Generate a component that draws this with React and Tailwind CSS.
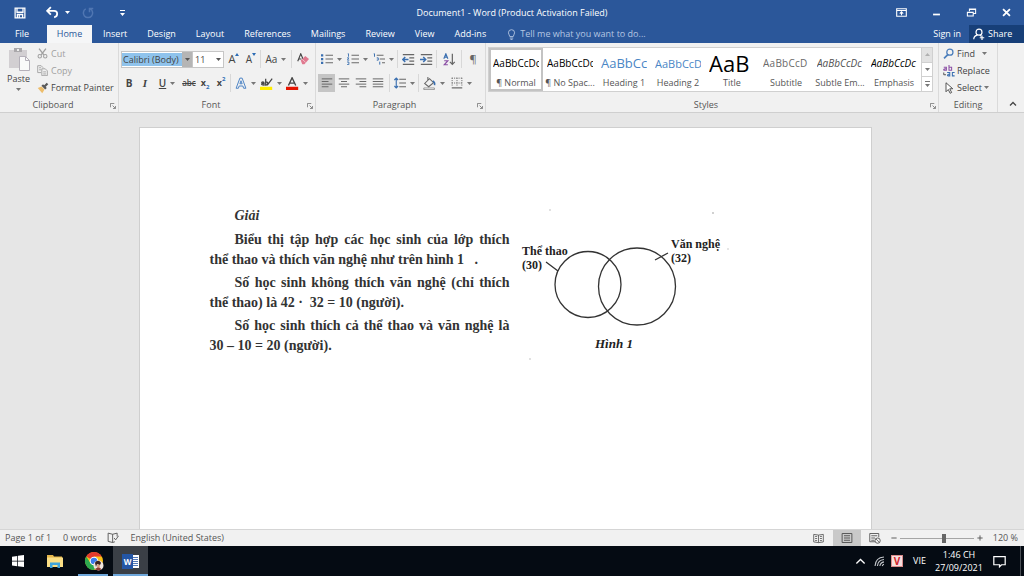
import React, { useState } from 'react';
import clsx from 'clsx';

const TABS = ['Insert', 'Design', 'Layout', 'References', 'Mailings', 'Review', 'View', 'Add-ins'];

const STYLES = [
  { name: '¶ Normal', sample: 'AaBbCcDc', className: 'text-[10px] text-black', active: true },
  { name: '¶ No Spac...', sample: 'AaBbCcDc', className: 'text-[10px] text-black' },
  { name: 'Heading 1', sample: 'AaBbCc', className: 'text-[13px] text-[#4a86c5]' },
  { name: 'Heading 2', sample: 'AaBbCcD', className: 'text-[11px] text-[#4a86c5]' },
  { name: 'Title', sample: 'AaB', className: 'text-[22px] text-black' },
  { name: 'Subtitle', sample: 'AaBbCcD', className: 'text-[10px] tracking-wide text-[#6a6a6a]' },
  { name: 'Subtle Em...', sample: 'AaBbCcDc', className: 'text-[10px] italic text-[#505050]' },
  { name: 'Emphasis', sample: 'AaBbCcDc', className: 'text-[10px] italic text-black' },
];

function Icon({ className = 'size-4', children }) {
  return (
    <svg viewBox="0 0 16 16" fill="none" stroke="currentColor" className={clsx('shrink-0', className)} aria-hidden="true">
      {children}
    </svg>
  );
}

function Caret({ className }) {
  return (
    <svg viewBox="0 0 5 3" className={clsx('w-[5px] h-[3px] shrink-0', className)} aria-hidden="true">
      <path d="M0 0h5L2.5 3z" fill="currentColor" />
    </svg>
  );
}

function Tool({ label, caret, active, className = 'w-4', children }) {
  return (
    <button
      aria-label={label}
      className={clsx('h-[18px] flex items-center justify-center gap-1 shrink-0', active && 'bg-[#c5c5c5]', className)}
    >
      {children}
      {caret && <Caret className="text-[#777]" />}
    </button>
  );
}

function Divider() {
  return <span className="w-px h-[18px] mx-px bg-[#d8d8d8] shrink-0" />;
}

function Group({ title, launcher = true, className, children }) {
  return (
    <section className={clsx('flex flex-col border-r border-[#dadada] shrink-0', className)}>
      <div className="h-[55px]">{children}</div>
      <div className={clsx('h-[14px] flex items-center justify-center relative text-[#555]', launcher && 'pr-3')}>
        <span>{title}</span>
        {launcher && (
          <button aria-label={`${title} settings`} className="absolute right-[2px] top-[5px]">
            <svg viewBox="0 0 7 7" className="size-[6px]" fill="none" stroke="#777" aria-hidden="true">
              <path d="M.5 5V.5H5M3 3l3 3M6.5 3.5v3h-3" />
            </svg>
          </button>
        )}
      </div>
    </section>
  );
}

function TitleBar() {
  return (
    <header className="h-[25px] grid grid-cols-[1fr_auto_1fr] items-center">
      <div className="flex items-center pl-[14px]">
        <button aria-label="Save">
          <Icon className="size-3">
            <path d="M1.500 1.500h13v13h-13zM4 2v5h8V2M4.500 14v-4h7v4M7 11v3" strokeWidth="1.700" />
          </Icon>
        </button>
        <button aria-label="Undo" className="ml-5 flex items-center gap-[6px]">
          <Icon className="size-[13px]">
            <path d="M2 6h8c5 0 5 7 0 8M6 1.500L1.500 6 6 10.500" strokeWidth="2.200" />
          </Icon>
          <Caret />
        </button>
        <button aria-label="Redo" className="ml-3 text-[#5076b2]">
          <Icon className="size-3">
            <path d="M5 2.500a6.200 6.200 0 1 0 6 0M10 7V2h5" strokeWidth="2" />
          </Icon>
        </button>
        <button aria-label="Customize Quick Access Toolbar" className="ml-[26px]">
          <svg viewBox="0 0 5 6" className="w-[5px] h-[6px]" fill="currentColor" aria-hidden="true">
            <path d="M0 0h5v1H0zM0 3h5L2.500 6z" />
          </svg>
        </button>
      </div>
      <h1>Document1 - Word (Product Activation Failed)</h1>
      <div className="flex items-center justify-end gap-6 pr-3">
        <button aria-label="Ribbon Display Options">
          <Icon className="size-[11px]">
            <path d="M1 2.500h14v11H1zM1 5h14M8 12V7M5.500 9.500L8 7l2.500 2.500" strokeWidth="1.600" />
          </Icon>
        </button>
        <button aria-label="Minimize" className="pt-[3px]">
          <Icon className="size-[11px]"><path d="M3 8h10" strokeWidth="2.500" /></Icon>
        </button>
        <button aria-label="Restore Down">
          <Icon className="size-[11px]">
            <path d="M2 7.500h8.500v5.500H2zM5 6V3h9v6.500h-3M4.500 3.500h10M1.500 8h9.500" strokeWidth="1.500" />
          </Icon>
        </button>
        <button aria-label="Close">
          <Icon className="size-[11px]"><path d="M3 3l10 10M13 3L3 13" strokeWidth="2.600" /></Icon>
        </button>
      </div>
    </header>
  );
}

function TabRow() {
  return (
    <nav className="h-[18px] flex items-stretch">
      <button className="w-11 mr-[3px]">File</button>
      <button className="w-[45px] mr-px bg-[#f5f6f7] text-[#2b579a]">Home</button>
      {TABS.map(tab => (
        <button key={tab} className="px-[10px]">{tab}</button>
      ))}
      <label className="ml-[10px] flex items-center gap-[3px] flex-1 text-[#b4c6e2]">
        <Icon className="size-[11px]">
          <path d="M5.500 11C5.500 9 3.500 8 3.500 5.500a4.500 4.500 0 0 1 9 0C12.500 8 10.500 9 10.500 11zM5.500 13.200h5M6.500 15.200h3" strokeWidth="1.300" />
        </Icon>
        <input
          aria-label="Tell me what you want to do"
          placeholder="Tell me what you want to do..."
          className="w-40 bg-transparent outline-none placeholder:text-[#b4c6e2]"
        />
      </label>
      <button className="px-2">Sign in</button>
      <button className="w-[55px] bg-[#173f78] flex items-center gap-[3px] pl-1">
        <Icon className="size-3">
          <circle cx="8" cy="5.500" r="4" strokeWidth="1.600" />
          <path d="M1 15c0-3 2-5 5-5.500M9 9.500l2 1.500M12 10v6M9 13h6" strokeWidth="1.600" />
        </Icon>
        Share
      </button>
    </nav>
  );
}

function ClipboardGroup() {
  return (
    <Group title="Clipboard" className="w-[119px]">
      <div className="flex pt-[2px]">
        <button className="w-[37px] flex flex-col items-center pt-[2px]">
          <svg viewBox="0 0 24 24" className="size-6" fill="none" aria-hidden="true">
            <path d="M2 3h18v18H2z" fill="#d2cfd2" />
            <path d="M7 1h8v4H7z" fill="#aaa8ab" />
            <path d="M10 2h2v2h-2z" fill="#eee" />
            <path d="M12.500 9.500h6l4 4v10h-10z" fill="#fafafa" stroke="#b5b1ba" />
            <path d="M18.500 9.500v4h4" stroke="#b5b1ba" />
          </svg>
          <span className="mt-[2px]">Paste</span>
          <Caret className="mt-[3px] text-[#777]" />
        </button>
        <div className="flex flex-col whitespace-nowrap">
          <button className="h-[17px] flex items-center gap-[3px] text-[#a0a0a0]">
            <Icon className="size-[11px]">
              <path d="M3 1l7 9M13 1L6 10" strokeWidth="2" />
              <circle cx="4" cy="12" r="2.500" strokeWidth="1.500" />
              <circle cx="12" cy="12" r="2.500" strokeWidth="1.500" />
            </Icon>
            Cut
          </button>
          <button className="h-[17px] flex items-center gap-[3px] text-[#a0a0a0]">
            <Icon className="size-[11px]">
              <path d="M6 11H1V1h5l3 3M3 4h3M3 7h3M7 5.500h5l3 3v7H7zM9 10h4M9 13h4" strokeWidth="1.300" />
            </Icon>
            Copy
          </button>
          <button className="h-[17px] flex items-center gap-[2px]">
            <Icon className="size-3">
              <path d="M1 8l5-2 4 4-3 5z" fill="#edbd6b" stroke="none" />
              <path d="M7 4l5 5M10 6l4-4" stroke="#595959" strokeWidth="3" />
            </Icon>
            Format Painter
          </button>
        </div>
      </div>
    </Group>
  );
}

function Combo({ label, options, className, selectClassName, caretClassName }) {
  const [value, setValue] = useState(options[0]);
  return (
    <label className={clsx('h-[17px] flex items-stretch bg-white border border-[#c6c6c6] relative', className)}>
      <span className="sr-only">{label}</span>
      <select
        value={value}
        onChange={e => setValue(e.target.value)}
        className={clsx('appearance-none outline-none flex-1 min-w-0 my-px leading-[13px]', selectClassName)}
      >
        {options.map(o => <option key={o}>{o}</option>)}
      </select>
      <span className={clsx('w-[10px] flex items-center justify-center pointer-events-none', caretClassName)}>
        <Caret className="text-[#555]" />
      </span>
    </label>
  );
}

function FontGroup() {
  return (
    <Group title="Font" className="w-[197px]">
      <div className="flex flex-col gap-[6px] pl-[2px] pt-[7px]">
        <div className="flex items-center">
          <Combo
            label="Font"
            options={['Calibri (Body)', 'Arial', 'Times New Roman']}
            className="w-[72px]"
            selectClassName="bg-[#8fc3ec] pl-px"
            caretClassName="bg-[#b5b5b5]"
          />
          <Combo label="Font size" options={['11', '12', '14']} className="w-[31px] border-l-0" selectClassName="pl-[2px]" />
          <Tool label="Grow Font" className="w-[18px] ml-px">
            <span className="text-[11px]">A</span>
            <svg viewBox="0 0 4 3" className="w-1 h-[3px] self-start mt-[3px] -ml-1" aria-hidden="true"><path d="M0 3h4L2 0z" fill="#2b6cb5" /></svg>
          </Tool>
          <Tool label="Shrink Font" className="w-4">
            <span className="text-[10px]">A</span>
            <svg viewBox="0 0 4 3" className="w-1 h-[3px] self-start mt-[3px] -ml-1" aria-hidden="true"><path d="M0 0h4L2 3z" fill="#2b6cb5" /></svg>
          </Tool>
          <Divider />
          <Tool label="Change Case" caret className="w-[28px]"><span className="text-[10px]">Aa</span></Tool>
          <Divider />
          <Tool label="Clear All Formatting" className="w-5">
            <Icon className="size-3">
              <path d="M1 11L5 1l3 7M2.500 8H6" strokeWidth="1.500" />
              <path d="M5 10l6-6 5 4-6 7H7z" fill="#e0798f" stroke="none" />
              <path d="M7 8.500l4.500 4" stroke="#f5d5dc" />
            </Icon>
          </Tool>
        </div>
        <div className="flex items-center text-[10px]">
          <Tool label="Bold"><b>B</b></Tool>
          <Tool label="Italic"><i className="font-['Liberation_Serif',serif] font-bold text-[11px]">I</i></Tool>
          <Tool label="Underline" caret className="w-7"><span className="underline font-semibold">U</span></Tool>
          <Tool label="Strikethrough" className="w-4"><s className="text-[8px] font-semibold">abc</s></Tool>
          <Tool label="Subscript"><b className="text-[9px]">x</b><span className="text-[6px] font-bold text-[#2b6cb5] -ml-1 self-end leading-[10px]">2</span></Tool>
          <Tool label="Superscript"><b className="text-[9px]">x</b><span className="text-[6px] font-bold text-[#2b6cb5] -ml-1 self-start leading-[10px]">2</span></Tool>
          <Divider />
          <Tool label="Text Effects" caret className="w-[26px]">
            <Icon className="size-3"><path d="M1.500 15L6.500 1.500h3l5 13.500h-3l-1-3h-5l-1 3zM6.500 9h3L8 5z" stroke="#4b83c4" strokeWidth="1.300" /></Icon>
          </Tool>
          <Tool label="Text Highlight Color" caret className="w-[26px]">
            <Icon className="size-[13px]">
              <path d="M2 7.500c0-2 3-2 3 0V10c-4 0-4-2.500 0-2.500M7 2v8c3.500 0 3.500-4 0-4M9 10l6-8" strokeWidth="1.500" />
              <path d="M0 12h15v4H0z" fill="#ffed00" stroke="none" />
            </Icon>
          </Tool>
          <Tool label="Font Color" caret className="w-[26px]">
            <Icon className="size-[13px]">
              <path d="M3 10.500L7.500 1 12 10.500M4.500 7.500h6" strokeWidth="1.700" />
              <path d="M0 12h15v4H0z" fill="#e51400" stroke="none" />
            </Icon>
          </Tool>
        </div>
      </div>
    </Group>
  );
}

const ALIGNMENTS = [
  { label: 'Align Left', d: 'M1 2.500h14M1 6h9M1 9.500h14M1 13h9' },
  { label: 'Center', d: 'M1 2.500h14M4 6h8M1 9.500h14M4 13h8' },
  { label: 'Align Right', d: 'M1 2.500h14M6 6h9M1 9.500h14M6 13h9' },
  { label: 'Justify', d: 'M1 2.500h14M1 6h14M1 9.500h14M1 13h14' },
];

function ParagraphGroup() {
  return (
    <Group title="Paragraph" className="w-[170px]">
      <div className="flex flex-col gap-[6px] pl-[2px] pt-[7px] text-[#666]">
        <div className="flex items-center">
          <Tool label="Bullets" caret className="w-[26px]">
            <Icon className="size-3">
              <path d="M6 3h10M6 8h10M6 13h10" strokeWidth="1.300" />
              <path d="M0 3h3M0 8h3M0 13h3" stroke="#3a6fb0" strokeWidth="3" />
            </Icon>
          </Tool>
          <Tool label="Numbering" caret className="w-[26px]">
            <Icon className="size-3">
              <path d="M6 3h10M6 8h10M6 13h10" strokeWidth="1.300" />
              <path d="M1 1h1v4M0 6.500h2.500L.5 9.500H3M0 12h2.500v3.500H0" stroke="#3a6fb0" strokeWidth="1.200" />
            </Icon>
          </Tool>
          <Tool label="Multilevel List" caret className="w-[26px]">
            <Icon className="size-3">
              <path d="M5 3h9M9 8h7M12 13h4" strokeWidth="1.300" />
              <path d="M1 1h1v4M5 6.500h2v3H5M9 11.500v4" stroke="#3a6fb0" strokeWidth="1.300" />
            </Icon>
          </Tool>
          <Divider />
          <Tool label="Decrease Indent" className="w-[18px]">
            <Icon className="size-[13px]">
              <path d="M1 2h14M9 6h6M9 10h6M1 14h14" strokeWidth="1.400" />
              <path d="M8 8H1M4 5L1 8l3 3" stroke="#3a6fb0" strokeWidth="1.800" />
            </Icon>
          </Tool>
          <Tool label="Increase Indent" className="w-[18px]">
            <Icon className="size-[13px]">
              <path d="M1 2h14M9 6h6M9 10h6M1 14h14" strokeWidth="1.400" />
              <path d="M0 8h7M4 5l3 3-3 3" stroke="#3a6fb0" strokeWidth="1.800" />
            </Icon>
          </Tool>
          <Divider />
          <Tool label="Sort" className="w-[22px]">
            <Icon className="size-[13px]">
              <path d="M1 7l2.500-6L6 7M2 5h3" stroke="#3a6fb0" strokeWidth="1.400" />
              <path d="M1.500 9.500H6l-4.500 5H6" stroke="#8b4fa5" strokeWidth="1.400" />
              <path d="M11.500 1v13M8.500 11l3 3 3-3" strokeWidth="1.500" />
            </Icon>
          </Tool>
          <Divider />
          <Tool label="Show/Hide ¶" className="w-5"><span className="text-[11px]">¶</span></Tool>
        </div>
        <div className="flex items-center">
          <div className="flex mr-[2px]">
            {ALIGNMENTS.map((a, i) => (
              <Tool key={a.label} label={a.label} active={i === 0} className="w-[17px]">
                <Icon className="size-3"><path d={a.d} strokeWidth="1.300" /></Icon>
              </Tool>
            ))}
          </div>
          <Divider />
          <Tool label="Line Spacing" caret className="w-[26px]">
            <Icon className="size-3">
              <path d="M7 3h9M7 8h9M7 13h9" strokeWidth="1.400" />
              <path d="M3 1v14M.5 4L3 1.500 5.500 4M.5 12L3 14.500 5.500 12" stroke="#3a6fb0" strokeWidth="1.500" />
            </Icon>
          </Tool>
          <Divider />
          <Tool label="Shading" caret className="w-[28px]">
            <Icon className="size-[13px]">
              <path d="M2 8l6-6 5 5-6 5zM6 4V0" strokeWidth="1.300" />
              <path d="M12 5c2 1 3 3 2 5" stroke="#3a6fb0" strokeWidth="2" />
              <path d="M1 13.500h13v2H1z" fill="#fff" strokeWidth=".8" />
            </Icon>
          </Tool>
          <Tool label="Borders" caret className="w-[26px]">
            <Icon className="size-3">
              <path d="M1.500 1v12M8 1v12M14.500 1v12M1 1.500h14M1 8h14" strokeDasharray="1.500 1.500" strokeWidth="1.200" />
              <path d="M1 14.500h14" strokeWidth="1.600" />
            </Icon>
          </Tool>
        </div>
      </div>
    </Group>
  );
}

function StylesGroup() {
  return (
    <Group title="Styles" className="flex-1 min-w-0">
      <div className="pl-[2px] pr-[5px] pt-1">
        <div className="h-[45px] flex bg-white border border-[#d0d0d0]">
          <div className="flex-1 min-w-0 grid grid-cols-8">
            {STYLES.map(style => (
              <button
                key={style.name}
                className={clsx('min-w-0 flex flex-col items-center overflow-hidden border-2', style.active ? 'border-[#c3c3c3]' : 'border-transparent')}
              >
                <span className={clsx('h-[27px] w-[46px] leading-[27px] text-left overflow-hidden whitespace-nowrap', style.className)}>
                  {style.sample}
                </span>
                <span className="leading-3 whitespace-nowrap text-[#555]">{style.name}</span>
              </button>
            ))}
          </div>
          <div className="w-[11px] flex flex-col border-l border-[#d0d0d0] divide-y divide-[#d0d0d0] text-[#777]">
            <button aria-label="Previous styles" className="flex-1 flex items-center justify-center bg-[#e2e2e2] text-[#b0b0b0]">
              <Caret className="rotate-180" />
            </button>
            <button aria-label="Next styles" className="flex-1 flex items-center justify-center"><Caret /></button>
            <button aria-label="More styles" className="flex-1 flex items-center justify-center">
              <svg viewBox="0 0 5 6" className="w-[5px] h-[6px]" fill="currentColor" aria-hidden="true">
                <path d="M0 0h5v1H0zM0 3h5L2.500 6z" />
              </svg>
            </button>
          </div>
        </div>
      </div>
    </Group>
  );
}

function EditingGroup() {
  return (
    <Group title="Editing" launcher={false} className="w-[59px]">
      <div className="flex flex-col items-start pl-1 pt-[2px]">
        <button className="h-[17px] flex items-center gap-[3px]">
          <Icon className="size-[11px]">
            <circle cx="10" cy="6" r="4.500" stroke="#4a7dbb" strokeWidth="1.800" />
            <path d="M7 9.500L1.500 15" stroke="#4a7dbb" strokeWidth="2.500" />
          </Icon>
          Find
          <Caret className="ml-1 text-[#777]" />
        </button>
        <button className="h-[17px] flex items-center gap-[2px]">
          <Icon className="size-3">
            <path d="M1 3h3.500v4H2C0 7 1 4.500 4 5M8 0v7h3.500V3H8" stroke="#8b4fa5" strokeWidth="1.400" />
            <path d="M5.500 10h3.500v4.500H7c-2 0-1-2.500 2-2.500M15.500 10h-3v4.500h3" stroke="#3a6fb0" strokeWidth="1.400" />
            <path d="M1 10v3h3" strokeWidth="1.200" />
          </Icon>
          Replace
        </button>
        <button className="h-[17px] flex items-center gap-[2px]">
          <Icon className="size-3"><path d="M4 1v12l3-3 2.500 5 2-1L9 9h4z" strokeWidth="1.200" fill="#fff" /></Icon>
          Select
          <Caret className="text-[#777]" />
        </button>
      </div>
    </Group>
  );
}

function Ribbon() {
  return (
    <div className="h-[70px] flex bg-[#f1f1f1] border-b border-[#cfcfcf] text-[#444]">
      <ClipboardGroup />
      <FontGroup />
      <ParagraphGroup />
      <StylesGroup />
      <EditingGroup />
      <div className="w-[26px] flex items-end justify-center pl-1 pb-1">
        <button aria-label="Collapse the Ribbon">
          <Icon className="size-2"><path d="M2 11l6-6 6 6" strokeWidth="2.500" /></Icon>
        </button>
      </div>
    </div>
  );
}

function VennDiagram() {
  return (
    <svg viewBox="0 0 220 160" className="w-[220px] h-[160px] shrink-0" role="img" aria-label="Hình 1">
      <g fill="none" stroke="#333" strokeWidth="1.300">
        <circle cx="78" cy="84.500" r="33" />
        <circle cx="127" cy="86.500" r="38.500" />
        <path d="M36 62l12 9M145 60l13-7" />
      </g>
      <g fill="#222" fontFamily="'Liberation Serif', serif" fontSize="12">
        <text x="12" y="55" fontWeight="700">Thể thao</text>
        <text x="12" y="69" fontWeight="700">(30)</text>
        <text x="161" y="48" fontWeight="700">Văn nghệ</text>
        <text x="161" y="62" fontWeight="700">(32)</text>
        <text x="85" y="148" fontSize="13" fontWeight="700" fontStyle="italic">Hình 1</text>
      </g>
      <g fill="#bbb">
        <circle cx="40" cy="10" r=".8" />
        <circle cx="203" cy="13" r=".9" />
        <circle cx="218" cy="49" r=".7" />
        <circle cx="20" cy="159" r=".8" />
      </g>
    </svg>
  );
}

function DocumentArea() {
  return (
    <main className="flex-1 min-h-0 overflow-hidden bg-[#e6e6e6] pt-[14px] pr-[14px] flex justify-center">
      <article className="w-[733px] max-w-full bg-white border border-b-0 border-[#cfcfcf] pl-[70px] pt-[72px] flex items-start">
        <div className="w-[300px] shrink-0 pt-[6px] font-['Liberation_Serif',serif] text-[14px] leading-5 font-bold text-[#333] text-justify">
          <p className="indent-[25px] italic mb-1">Giải</p>
          <p className="indent-[25px] mb-[3px]">Biểu thị tập hợp các học sinh của lớp thích thể thao và thích văn nghệ như trên hình 1&nbsp;&nbsp; .</p>
          <p className="indent-[25px] mb-[3px]">Số học sinh không thích văn nghệ (chỉ thích thể thao) là 42 ·&nbsp; 32 = 10 (người).</p>
          <p className="indent-[25px]">Số học sinh thích cả thể thao và văn nghệ là 30 – 10 = 20 (người).</p>
        </div>
        <VennDiagram />
      </article>
    </main>
  );
}

function StatusBar() {
  const [zoom, setZoom] = useState(60);
  return (
    <footer className="h-[17px] flex items-center bg-[#f1f1f1] border-t border-[#d5d5d5] text-[#555] pl-[5px] pr-[6px]">
      <span>Page 1 of 1</span>
      <span className="ml-3">0 words</span>
      <button aria-label="Proofing" className="ml-[11px]">
        <Icon className="size-3">
          <path d="M7.500 3v11M7.500 3L1.500 1.500v11l6 1.500 3-1M7.500 3l6-1.500V6M9.500 8l2 2.500L15.500 5" strokeWidth="1.200" />
        </Icon>
      </button>
      <button className="ml-[11px]">English (United States)</button>
      <div className="ml-auto flex items-center">
        <button aria-label="Read Mode" className="w-7 h-4 flex items-center justify-center">
          <Icon className="size-[11px]"><path d="M8 3v11M1 2l7 1 7-1v11l-7 1-7-1zM3 5h3M3 8h3M3 11h3M10 5h3M10 8h3M10 11h3" strokeWidth="1.200" /></Icon>
        </button>
        <button aria-label="Print Layout" className="w-7 h-4 flex items-center justify-center bg-[#c9c9c9]">
          <Icon className="size-3"><path d="M1.500 2h13v12h-13zM4 5h8M4 8h8M4 11h8" strokeWidth="1.300" /></Icon>
        </button>
        <button aria-label="Web Layout" className="w-7 h-4 flex items-center justify-center">
          <Icon className="size-3">
            <path d="M8 13H1V2h12v5M3 5h8M3 8h5M3 11h4" strokeWidth="1.200" />
            <circle cx="11.500" cy="11.500" r="3.500" strokeWidth="1.200" />
            <path d="M9 9l5 5" />
          </Icon>
        </button>
        <button aria-label="Zoom Out" className="ml-[2px]"><Icon className="size-[6px]"><path d="M1 8h14" strokeWidth="2.500" /></Icon></button>
        <input
          type="range"
          aria-label="Zoom"
          value={zoom}
          onChange={e => setZoom(e.target.value)}
          className="w-[74px] h-3 mx-[3px] appearance-none bg-transparent [&::-webkit-slider-runnable-track]:h-px [&::-webkit-slider-runnable-track]:bg-[#a5a5a5] [&::-webkit-slider-thumb]:appearance-none [&::-webkit-slider-thumb]:w-1 [&::-webkit-slider-thumb]:h-[9px] [&::-webkit-slider-thumb]:-mt-1 [&::-webkit-slider-thumb]:bg-[#666]"
        />
        <button aria-label="Zoom In"><Icon className="size-[6px]"><path d="M1 8h14M8 1v14" strokeWidth="2.500" /></Icon></button>
        <button className="ml-[10px]">120 %</button>
      </div>
    </footer>
  );
}

function Taskbar() {
  return (
    <footer className="h-[30px] flex items-stretch bg-[#050b13] text-white">
      <div className="flex gap-px">
        <button aria-label="Start" className="w-9 flex items-center justify-center">
          <svg viewBox="0 0 16 16" className="size-3" fill="currentColor" aria-hidden="true">
            <path d="M0 2.200l7-1v6.500H0zM8 1.100L16 0v7.700H8zM0 8.600h7v6.300l-7-1zM8 8.600h8V16l-8-1.100z" />
          </svg>
        </button>
        <button aria-label="File Explorer" className="w-9 flex items-center justify-center">
          <svg viewBox="0 0 16 14" className="w-4 h-[14px]" aria-hidden="true">
            <path d="M0 1h6l1 1.500h8V4H0z" fill="#e5b64a" />
            <path d="M0 3.500h16V13H0z" fill="#fbdf85" />
            <path d="M3 14V8.500h10V14h-2.500v-3h-5v3z" fill="#3fa5dc" />
          </svg>
        </button>
        <button aria-label="Google Chrome" className="w-[38px] pl-[2px] flex items-center justify-center relative">
          <svg viewBox="0 0 20 20" className="size-5" aria-hidden="true">
            <circle cx="10" cy="10" r="9" fill="#fbc116" />
            <path d="M10 10L2.200 5.500A9 9 0 0 1 17.800 5.500H10z" fill="#e33b2e" />
            <path d="M2.200 5.500A9 9 0 0 0 10 19l4-6.500-7.500-.5z" fill="#2da94f" />
            <circle cx="10" cy="10" r="4.300" fill="#fff" />
            <circle cx="10" cy="10" r="3.300" fill="#3b7ded" />
            <circle cx="14.500" cy="14.500" r="5" fill="#f1e5df" />
            <path d="M11 12c1-3 5-3 6 0l-1 2-3-1-1 3z" fill="#3b2320" />
            <path d="M13 13.500l3 .5-.5 3-2 .5z" fill="#d99a7b" />
            <path d="M11 18l2.500-1.500 3 .5.500 1.500q-3 2-6-.5" fill="#8e3b35" />
          </svg>
          <span className="absolute inset-x-1 bottom-0 h-[2px] bg-[#6fa8dc]" />
        </button>
        <button aria-label="Word" className="w-[35px] flex items-center justify-center bg-[#3a3f46] border-b-2 border-[#6fa8dc]">
          <span className="w-[17px] h-[15px] flex items-center mt-[2px]">
            <span className="w-[11px] h-[15px] bg-[#2456a5] text-[8px] leading-[15px] font-bold">W</span>
            <svg viewBox="0 0 6 13" className="w-[6px] h-[13px]" aria-hidden="true">
              <path d="M0 0h6v13H0z" fill="#fff" />
              <path d="M0 2.500h5M0 4.500h5M0 6.500h5M0 8.500h5M0 10.500h5" stroke="#2456a5" strokeWidth=".8" />
            </svg>
          </span>
        </button>
      </div>
      <div className="ml-auto flex items-center">
        <button aria-label="Show hidden icons">
          <Icon className="size-[11px]"><path d="M2 11l6-6 6 6" strokeWidth="1.800" /></Icon>
        </button>
        <button aria-label="Network" className="ml-2">
          <Icon className="size-[11px]">
            <path d="M1.500 14.500C2 7 7 2 14.500 1.500M5 14.500C5.500 9 9 5.500 14.500 5M8.500 14.500c.5-3 3-5.500 6-6M12 14.500c.5-1.500 1-2 2.500-2.500" stroke="#c5c8cc" strokeWidth="1.600" />
          </Icon>
        </button>
        <button aria-label="Vietnamese keyboard" className="ml-[6px] size-3 bg-[#f6dfdf] text-[#d0262c] border border-[#d98b8b] text-[10px] leading-[10px] font-bold">
          V
        </button>
        <button className="ml-[10px]">VIE</button>
        <button className="ml-2 w-[50px] leading-[13px] text-center whitespace-nowrap">
          1:46 CH<br />27/09/2021
        </button>
        <button aria-label="Notifications" className="ml-[9px]">
          <Icon className="size-[13px]"><path d="M1 2h14v10h-4.500L8 14.500V12H1z" strokeWidth="1.500" /></Icon>
        </button>
        <span className="ml-[14px] mr-[3px] w-px self-stretch bg-[#4a4f55]" />
      </div>
    </footer>
  );
}

export default function App() {
  return (
    <div className="h-screen flex flex-col overflow-hidden font-['Open_Sans',sans-serif] text-[9px] leading-3">
      <div className="bg-[#2b579a] text-white">
        <TitleBar />
        <TabRow />
      </div>
      <Ribbon />
      <DocumentArea />
      <StatusBar />
      <Taskbar />
    </div>
  );
}
